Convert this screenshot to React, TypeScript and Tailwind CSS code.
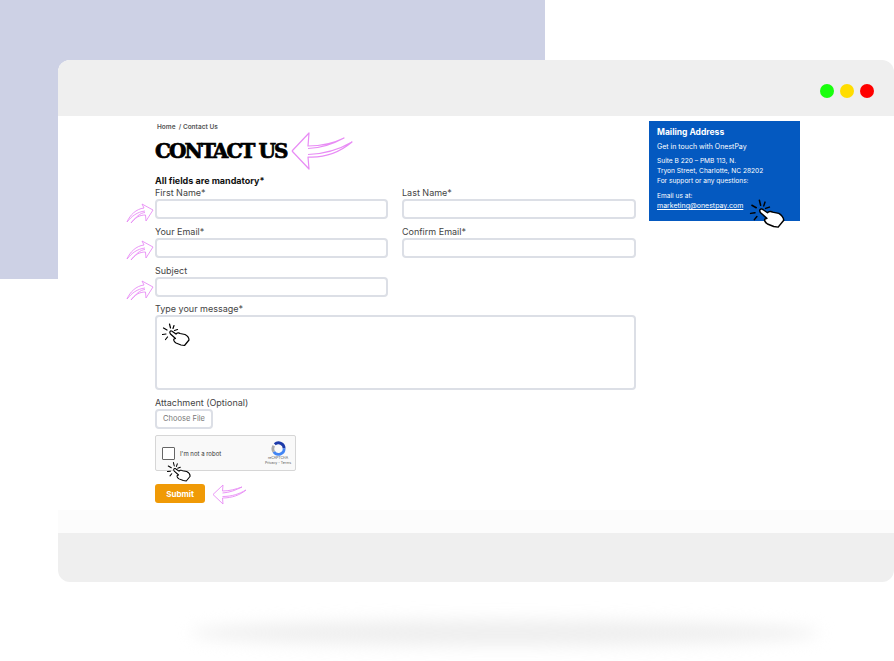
// App.tsx
import React from 'react';

const BODY = { fontFamily: 'Inter, "Noto Sans", sans-serif' };

function BigArrow({ className }: { className: string }) {
    return (
        <svg className={className} viewBox="0 0 64 40" fill="none" stroke="#e88cf5" strokeWidth="1.2" strokeLinejoin="round">
            <path d="M2 20 L19 2 L18 15 C32 15 44 12 54 7 C45 12 33 17 18 17.5" />
            <path d="M2 20 L19 38 L18 26 C36 27 50 21 62 11 C50 18 36 23 18 23.5" />
        </svg>
    );
}

function SmallArrow({ className }: { className: string }) {
    return (
        <svg className={className} viewBox="0 0 28 21" fill="none" stroke="#e88cf5" strokeWidth="0.9" strokeLinejoin="round">
            <path d="M27 7 L16 1 L18 5 C10 6 4 12 1 19 C6 13 11 9 19 8" />
            <path d="M27 7 L20 18 L19.5 12 C13 12 9 15 5 20 C10 14 14 10 19 9.5" />
        </svg>
    );
}

function SubmitArrow({ className }: { className: string }) {
    return (
        <svg className={className} viewBox="0 0 34 21" fill="none" stroke="#e88cf5" strokeWidth="0.9" strokeLinejoin="round">
            <path d="M1 10.5 L11 1 L10.5 7 C18 7 24 5 30 3 C24 6 18 8.5 10.5 9" />
            <path d="M1 10.5 L11 20 L10.5 14 C20 14 28 11 34 6 C27 10 20 12.5 10.5 12.5" />
        </svg>
    );
}

function ClickHand({ className, fill = 'none' }: { className: string; fill?: string }) {
    return (
        <svg className={className} viewBox="0 0 28 24" fill="none" stroke="#000" strokeLinecap="round" strokeLinejoin="round">
            {/* burst */}
            <path strokeWidth="1.2" d="M7.5 1 L8.5 5 M1.5 5 L5 7 M0.5 11.5 L4 11 M3.5 16.5 L5.5 14 M12 2.5 L11 5.5 M15.5 6.5 L12.5 7.5" />
            {/* hand */}
            <path
                fill={fill}
                strokeWidth="1.2"
                d="M8 8.5 C8.8 7.5 10 8 10.8 8.8 L14 11 C15 9.8 17 9.6 18 10.5 L23 11.5 C25 12.5 27 15 27 17 L22.5 22.5 L19 22 L14 20 C12.5 19 11 17 12 16 L13.5 15.5 L8.5 11 C8 10.4 7.5 9.5 8 8.5 Z"
            />
        </svg>
    );
}

function Field({ label }: { label: string }) {
    return (
        <div className="flex flex-col">
            <label className="text-[9px] leading-[13px] text-[#444]">{label}</label>
            <input className="h-[20px] w-full rounded-[4px] border-2 border-[#dcdfe6] bg-white" />
        </div>
    );
}

export default function App() {
    return (
        <div className="relative h-[661px] w-[894px] overflow-hidden bg-white" style={BODY}>
            {/* lavender backdrop */}
            <div className="absolute left-0 top-0 h-[279px] w-[545px] bg-[#cdd1e5]" />
            {/* shadow under the window */}
            <div className="absolute left-[190px] top-[620px] h-[26px] w-[630px] rounded-[50%] bg-[#efefef] blur-[8px]" />

            <div className="relative pl-[58px] pt-[60px]">
                <div className="overflow-hidden rounded-[12px] bg-white">
                    {/* window top bar */}
                    <div className="flex h-[56px] items-center justify-end gap-[6px] bg-[#efefef] pr-[20px] pt-[6px]">
                        <span className="h-[14px] w-[14px] rounded-full bg-[#19ff0d]" />
                        <span className="h-[14px] w-[14px] rounded-full bg-[#ffdd00]" />
                        <span className="h-[14px] w-[14px] rounded-full bg-[#ff0000]" />
                    </div>

                    {/* page body */}
                    <div className="flex h-[394px] items-start pl-[97px]">
                        <div className="w-[481px]">
                            <div className="ml-[2px] mt-[7px] text-[6.5px] font-semibold leading-[8px] text-[#555]">
                                Home &nbsp;/ Contact Us
                            </div>
                            <h1
                                className="mt-[8px] text-[20px] font-black leading-[24px] tracking-[-1.9px] text-black [-webkit-text-stroke:0.7px_black]"
                                style={{ fontFamily: '"DejaVu Serif", serif' }}
                            >
                                CONTACT US
                            </h1>
                            <div className="mt-[12px] text-[9px] font-bold leading-[12px] text-[#111]">All fields are mandatory*</div>

                            <div className="-mt-[1px] grid grid-cols-[233px_234px] gap-x-[14px] gap-y-[6px]">
                                <Field label="First Name*" />
                                <Field label="Last Name*" />
                                <Field label="Your Email*" />
                                <Field label="Confirm Email*" />
                                <Field label="Subject" />
                            </div>

                            <label className="mt-[5px] block text-[9px] leading-[13px] text-[#444]">Type your message*</label>
                            <textarea className="block h-[75px] w-[481px] resize-none rounded-[4px] border-2 border-[#dcdfe6] bg-white" />

                            <label className="mt-[6px] block text-[9px] leading-[13px] text-[#444]">Attachment (Optional)</label>
                            <button className="block h-[20px] w-[58px] rounded-[4px] border-2 border-[#dcdfe6] bg-white text-[7.5px] text-[#777]">
                                Choose File
                            </button>

                            {/* captcha box */}
                            <div className="mt-[6px] flex h-[36px] w-[141px] items-center rounded-[2px] border border-[#d6d6d6] bg-[#f9f9f9] pl-[6px]">
                                <span className="h-[13px] w-[13px] rounded-[1px] border-[1.5px] border-[#666] bg-white" />
                                <span className="ml-[5px] text-[6px] text-[#333]">I'm not a robot</span>
                                <div className="ml-auto flex w-[32px] flex-col items-center pr-[2px]">
                                    <svg className="h-[15px] w-[15px]" viewBox="0 0 16 16" fill="none" strokeWidth="3">
                                        <path d="M4 3.5 A6 6 0 0 1 14 8" stroke="#1c3aa9" />
                                        <path d="M14 8 A6 6 0 0 1 3 11.5" stroke="#4285f4" />
                                        <path d="M3 11.5 A6 6 0 0 1 3 5" stroke="#ababab" />
                                    </svg>
                                    <span className="text-[3.5px] leading-[5px] text-[#555]">reCAPTCHA</span>
                                    <span className="text-[3.5px] leading-[5px] text-[#555]">Privacy - Terms</span>
                                </div>
                            </div>

                            <button className="mt-[13px] block h-[19px] w-[50px] rounded-[3px] bg-[#f09a06] text-[8px] font-bold text-white">
                                Submit
                            </button>
                        </div>

                        {/* mailing address card */}
                        <aside className="ml-[13px] mt-[5px] h-[100px] w-[151px] bg-[#0459c0] pl-[8px] pt-[6px] text-[6.6px] leading-[10px] text-white">
                            <div className="text-[8.5px] font-bold leading-[11px]">Mailing Address</div>
                            <div className="mt-[4px] text-[7px]">Get in touch with OnestPay</div>
                            <div className="mt-[4px]">Suite B 220 – PMB 113, N.</div>
                            <div>Tryon Street, Charlotte, NC 28202</div>
                            <div>For support or any questions:</div>
                            <div className="mt-[5px]">Email us at:</div>
                            <div className="text-[7px] underline">marketing@onestpay.com</div>
                        </aside>
                    </div>

                    <div className="h-[23px] bg-[#fcfcfc]" />
                    <div className="h-[49px] bg-[#efefef]" />
                </div>
            </div>

            {/* pink arrows drawn over the screenshot */}
            <BigArrow className="absolute left-[290px] top-[131px] h-[40px] w-[64px]" />
            <SmallArrow className="absolute left-[126px] top-[203px] h-[21px] w-[28px]" />
            <SmallArrow className="absolute left-[126px] top-[240px] h-[21px] w-[28px]" />
            <SmallArrow className="absolute left-[126px] top-[280px] h-[21px] w-[28px]" />
            <SubmitArrow className="absolute left-[212px] top-[484px] h-[21px] w-[34px]" />

            {/* click hands */}
            <ClickHand className="absolute left-[162px] top-[323px] h-[24px] w-[28px]" />
            <ClickHand className="absolute left-[167px] top-[460px] h-[24px] w-[24px]" fill="#fff" />
            <ClickHand className="absolute left-[749px] top-[199px] h-[30px] w-[37px]" fill="#fff" />
        </div>
    );
}
